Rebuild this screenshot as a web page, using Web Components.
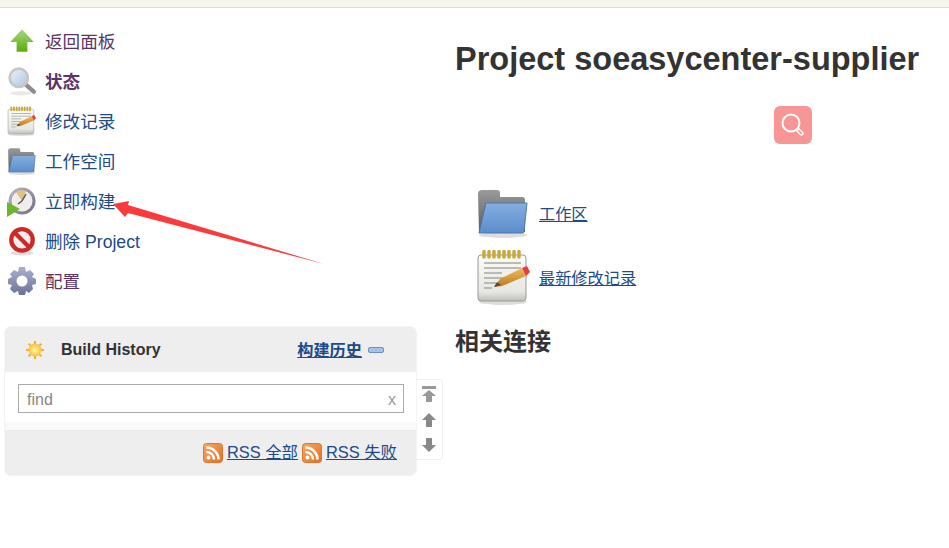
<!DOCTYPE html>
<html lang="zh">
<head>
<meta charset="utf-8">
<title>Project soeasycenter-supplier</title>
<style>
	html, body { margin: 0; padding: 0; background: #fff; }
	body { width: 949px; height: 548px; overflow: hidden; position: relative; font-family: "Liberation Sans", "Noto Sans CJK SC", sans-serif; color: #333; }
</style>
</head>
<body>
<jk-topbar></jk-topbar>
<jk-layout>
	<jk-sidebar slot="side">
		<jk-task icon="up" tone="visited">返回面板</jk-task>
		<jk-task icon="search" tone="visited" strong>状态</jk-task>
		<jk-task icon="notes">修改记录</jk-task>
		<jk-task icon="folder">工作空间</jk-task>
		<jk-task icon="clock" size="32">立即构建</jk-task>
		<jk-task icon="stop">删除 Project</jk-task>
		<jk-task icon="gear" size="32" tone="visited">配置</jk-task>
		<jk-history></jk-history>
	</jk-sidebar>
	<jk-main slot="main"></jk-main>
</jk-layout>
<jk-arrow></jk-arrow>

<script>
// use href can't see across shadow roots, so each svg carries its own defs
// gradient ids are prefixed per icon, several icons can share one shadow root
const ICONS = {
	up: `0 0 28 28|<defs><linearGradient id="up-g" x1="0" y1="0" x2="0" y2="1"><stop offset="0" stop-color="#a9d982"/><stop offset="1" stop-color="#5aab0c"/></linearGradient></defs>
		<path d="M14 3 25 15H19V24H9V15H3Z" fill="url(#up-g)"/>`,
	search: `0 0 28 28|<defs><linearGradient id="se-g" x1="0" y1="0" x2="1" y2="1"><stop offset="0" stop-color="#eef4fb"/><stop offset="1" stop-color="#a9c3e6"/></linearGradient></defs>
		<ellipse cx="13" cy="25.500" rx="10" ry="2" fill="#e8e8e8"/>
		<path d="M17 17 25 24" stroke="#8d8d8d" stroke-width="4" stroke-linecap="round"/>
		<circle cx="11" cy="11" r="8.500" fill="url(#se-g)" stroke="#c6c6c6" stroke-width="2.500"/>`,
	notes: `0 0 56 56|<defs><linearGradient id="no-g" x1="0" y1="0" x2="0" y2="1"><stop offset="0" stop-color="#fbfbf8"/><stop offset=".8" stop-color="#e6e6e2"/><stop offset="1" stop-color="#bdbdb9"/></linearGradient>
		<linearGradient id="no-p" x1="0" y1="0" x2="0" y2="1"><stop offset="0" stop-color="#f0bb5c"/><stop offset="1" stop-color="#bd7a1e"/></linearGradient></defs>
		<ellipse cx="27" cy="53" rx="24" ry="3" fill="#ddd"/>
		<rect x="2" y="6" width="48" height="46" rx="3" fill="url(#no-g)" stroke="#9a9a96"/>
		<path d="M8 2.500V8M13 2.500V8M18 2.500V8M23 2.500V8M28 2.500V8M33 2.500V8M38 2.500V8M43 2.500V8" stroke="#c9a93c" stroke-width="3.500" stroke-linecap="round"/>
		<path d="M8 14H45M8 19H45M8 24H26M8 29H36M8 34H20M8 39H16" stroke="#a8a8a4" stroke-width="1.500"/>
		<path d="M24 30 46 19 50 27 26 37 18 38Z" fill="url(#no-p)"/>
		<path d="M46 19 51 17 54 23 50 27Z" fill="#e0413e"/>
		<path d="M18 38 21 33 25 36Z" fill="#5b4630"/>`,
	folder: `0 0 54 50|<defs><linearGradient id="fo-g" x1="0" y1="0" x2="0" y2="1"><stop offset="0" stop-color="#86aee0"/><stop offset="1" stop-color="#5b8dcc"/></linearGradient>
		<linearGradient id="fo-b" x1="0" y1="0" x2="0" y2="1"><stop offset="0" stop-color="#9a9a9a"/><stop offset="1" stop-color="#5a5a5a"/></linearGradient></defs>
		<ellipse cx="27" cy="47" rx="24" ry="3" fill="#ddd"/>
		<path d="M2 6Q2 2 6 2H21Q24 2 24 5V9H46Q49 9 49 12V44H3Z" fill="url(#fo-b)"/>
		<path d="M10 15H51L48 44Q48 45 46 45H3Z" fill="url(#fo-g)" stroke="#4a78b0"/>`,
	clock: `0 0 32 32|<defs><linearGradient id="cl-g" x1="0" y1="0" x2="1" y2="1"><stop offset="0" stop-color="#bdb9c9"/><stop offset="1" stop-color="#6f6a86"/></linearGradient></defs>
		<circle cx="16" cy="16" r="13.500" fill="url(#cl-g)"/>
		<circle cx="16" cy="16" r="10.500" fill="#efeeea"/>
		<path d="M16 16 10 7A10.500 10.500 0 0 1 20 6Z" fill="#dcc57f"/>
		<path d="M16 16 20 9M16 16 12 19" stroke="#555" stroke-width="1.500"/>
		<path d="M1 17 14 24 1 32Z" fill="#6cb52d"/>`,
	stop: `0 0 28 28|<ellipse cx="14" cy="25.500" rx="11" ry="2" fill="#ddd"/>
		<circle cx="14" cy="13" r="10" fill="#f3efee" stroke="#cc2a26" stroke-width="4"/>
		<path d="M7 6 21 20" stroke="#cc2a26" stroke-width="4"/>`,
	gear: `0 0 32 32|<defs><linearGradient id="ge-g" x1="0" y1="0" x2="0" y2="1"><stop offset="0" stop-color="#aab0cf"/><stop offset="1" stop-color="#6c7398"/></linearGradient></defs>
		<path d="M13 2H19L20 7 24 5 28 9 26 12 30 14V19L26 20 27 24 23 28 20 26 19 30H13L12 26 8 28 4 24 6 20 2 19V14L6 12 4 9 8 5 12 7Z" fill="url(#ge-g)"/>
		<circle cx="16" cy="16" r="5.500" fill="#fff"/>`,
	sun: `0 0 20 20|<defs><radialGradient id="su-g"><stop offset="0" stop-color="#fff7b0"/><stop offset="1" stop-color="#f9c22e"/></radialGradient></defs>
		<g stroke="#f2a93b" stroke-width="2"><path d="M10 1V19M1 10H19M3.600 3.600 16.400 16.400M16.400 3.600 3.600 16.400"/></g>
		<circle cx="10" cy="10" r="6.500" fill="url(#su-g)"/>`,
	rss: `0 0 20 20|<defs><linearGradient id="rs-g" x1="0" y1="0" x2="1" y2="1"><stop offset="0" stop-color="#f8a869"/><stop offset="1" stop-color="#e2701f"/></linearGradient></defs>
		<rect x=".5" y=".5" width="19" height="19" rx="3" fill="url(#rs-g)" stroke="#d9782e"/>
		<circle cx="5.500" cy="14.500" r="2" fill="#fff"/>
		<path d="M3.500 9A7.500 7.500 0 0 1 11 16.500M3.500 4.500A12 12 0 0 1 15.500 16.500" fill="none" stroke="#fff" stroke-width="2.500"/>`
};

function icon(name, w, h) {
	const [box, body] = ICONS[name].split("|");
	return `<svg width="${w}" height="${h}" viewBox="${box}" aria-hidden="true">${body}</svg>`;
}

class JkTopbar extends HTMLElement {
	constructor(...args) {
		super(...args);
		this.attachShadow({ mode: 'open' }).innerHTML = `
<style>
	:host { display: block; height: 7px; background: #f6f6ee; border-bottom: 1px solid #dcdcd4; }
</style>`;
	}
}
customElements.define("jk-topbar", JkTopbar);

class JkLayout extends HTMLElement {
	constructor(...args) {
		super(...args);
		this.attachShadow({ mode: 'open' }).innerHTML = `
<style>
	:host { display: grid; grid-template-columns: 455px 494px; }
</style>
<slot name="side"></slot>
<slot name="main"></slot>`;
	}
}
customElements.define("jk-layout", JkLayout);

class JkSidebar extends HTMLElement {
	constructor(...args) {
		super(...args);
		this.attachShadow({ mode: 'open' }).innerHTML = `
<style>
	:host { display: flex; flex-direction: column; padding-top: 13px; }
</style>
<slot></slot>`;
	}
}
customElements.define("jk-sidebar", JkSidebar);

class JkTask extends HTMLElement {
	constructor(...args) {
		super(...args);
		const colour = this.getAttribute("tone") === "visited" ? "#5c3566" : "#204a87";
		const weight = this.hasAttribute("strong") ? 700 : 400;
		const size = this.getAttribute("size") || 30;
		this.attachShadow({ mode: 'open' }).innerHTML = `
<style>
	:host { display: flex; align-items: center; height: 40px; padding-left: 6px; font-size: 17.6px; color: ${colour}; font-weight: ${weight}; }
	.ico { width: 32px; height: 32px; margin-right: 7px; flex: none; display: flex; align-items: center; justify-content: center; }
	.txt { padding-bottom: 2px; }
</style>
<span class="ico">${icon(this.getAttribute("icon"), size, size)}</span>
<span class="txt"><slot></slot></span>`;
	}
}
customElements.define("jk-task", JkTask);

class JkHistory extends HTMLElement {
	constructor(...args) {
		super(...args);
		this.attachShadow({ mode: 'open' }).innerHTML = `
<style>
	:host { display: flex; margin: 26px 0 0 5px; align-items: flex-start; }
	a { color: #204a87; text-decoration: underline; }
	.card { width: 411px; height: 148px; box-sizing: border-box; border-radius: 6px; background: #eee; display: flex; flex-direction: column; box-shadow: 0 0 0 1px #f4f4f4; }
	.head { height: 45px; display: flex; align-items: center; padding: 0 32px 0 20px; font-size: 16px; line-height: 18px; }
	.head svg { flex: none; }
	.title { font-weight: 700; color: #333; margin-left: 16px; flex: 1; }
	.head a { font-weight: 700; font-size: 16.2px; }
	.mini { width: 16px; height: 6px; margin-left: 6px; background: #a9c3e8; border: 1px solid #6a8fc4; border-radius: 2px; box-sizing: border-box; }
	.body { height: 50px; background: #fff; padding: 12px 12px 0 13px; box-sizing: border-box; }
	.find { height: 29px; box-sizing: border-box; border: 1px solid #aaa; display: flex; align-items: center; justify-content: space-between; padding: 2px 7px 0 8px; font-size: 16px; color: #888; }
	.x { font-size: 16px; color: #999; }
	.gap { height: 8px; background: #fafafa; border-bottom: 1px solid #eaeaea; }
	.foot { flex: 1; display: flex; align-items: center; justify-content: flex-end; padding: 0 19px 0 0; font-size: 16.4px; line-height: 18px; gap: 4px; }
	.foot span { display: flex; align-items: center; gap: 4px; }
	.foot a { margin-bottom: 2px; }
	.scroll { width: 27px; height: 81px; margin-top: 52px; box-sizing: border-box; border: 1px solid #f0f0f0; border-left: 0; border-radius: 0 4px 4px 0; display: flex; flex-direction: column; align-items: center; justify-content: space-around; padding: 0 0 2px; }
</style>
<div class="card">
	<div class="head">${icon("sun", 20, 20)}<span class="title">Build History</span><a>构建历史</a><span class="mini"></span></div>
	<div class="body"><div class="find"><span>find</span><span class="x">x</span></div></div>
	<div class="gap"></div>
	<div class="foot">
		<span>${icon("rss", 20, 20)}<a>RSS 全部</a></span>
		<span>${icon("rss", 20, 20)}<a>RSS 失败</a></span>
	</div>
</div>
<div class="scroll">
	<svg width="16" height="18" viewBox="0 0 16 18"><path d="M1 1H15V4H1ZM8 5 15 11H11V17H5V11H1Z" fill="#999"/></svg>
	<svg width="16" height="16" viewBox="0 0 16 16"><path d="M8 1 15 8H11V15H5V8H1Z" fill="#888"/></svg>
	<svg width="16" height="16" viewBox="0 0 16 16"><path d="M8 15 15 8H11V1H5V8H1Z" fill="#888"/></svg>
</div>`;
	}
}
customElements.define("jk-history", JkHistory);

class JkMain extends HTMLElement {
	constructor(...args) {
		super(...args);
		this.attachShadow({ mode: 'open' }).innerHTML = `
<style>
	:host { display: flex; flex-direction: column; color: #333; }
	h1 { margin: 32px 0 0; font-size: 32.5px; line-height: 38px; font-weight: 700; white-space: nowrap; }
	.search { width: 38px; height: 38px; margin: 28px 0 0 319px; background: #f89595; border-radius: 6px; display: flex; align-items: center; justify-content: center; }
	.links { margin: 44px 0 0 21px; display: flex; flex-direction: column; gap: 11px; }
	.row { display: flex; align-items: center; gap: 9px; font-size: 16.2px; }
	.row + .row { gap: 7px; }
	a { color: #204a87; text-decoration: underline; }
	h2 { margin: 21px 0 0; font-size: 24px; line-height: 32px; font-weight: 700; }
</style>
<h1>Project soeasycenter-supplier</h1>
<div class="search"><svg width="26" height="26" viewBox="0 0 26 26" fill="none" stroke="#fff" stroke-width="2"><circle cx="11" cy="11" r="8.500"/><path d="M18 18 21.500 21.500" stroke-width="4.500" stroke-linecap="round"/><path d="M18.500 18.500 21.500 21.500" stroke="#f89595" stroke-width="1.500" stroke-linecap="round"/></svg></div>
<div class="links">
	<div class="row">${icon("folder", 54, 50)}<a>工作区</a></div>
	<div class="row">${icon("notes", 56, 56)}<a>最新修改记录</a></div>
</div>
<h2>相关连接</h2>`;
	}
}
customElements.define("jk-main", JkMain);

// hand drawn annotation on top of the screenshot
class JkArrow extends HTMLElement {
	constructor(...args) {
		super(...args);
		this.attachShadow({ mode: 'open' }).innerHTML = `
<style>
	:host { position: absolute; left: 110px; top: 195px; width: 220px; height: 75px; pointer-events: none; }
</style>
<svg width="220" height="75" viewBox="0 0 220 75"><path d="M3 9 19 6 18 10 214 69 18 18 15 22Z" fill="#fb3b3b"/></svg>`;
	}
}
customElements.define("jk-arrow", JkArrow);
</script>
</body>
</html>
